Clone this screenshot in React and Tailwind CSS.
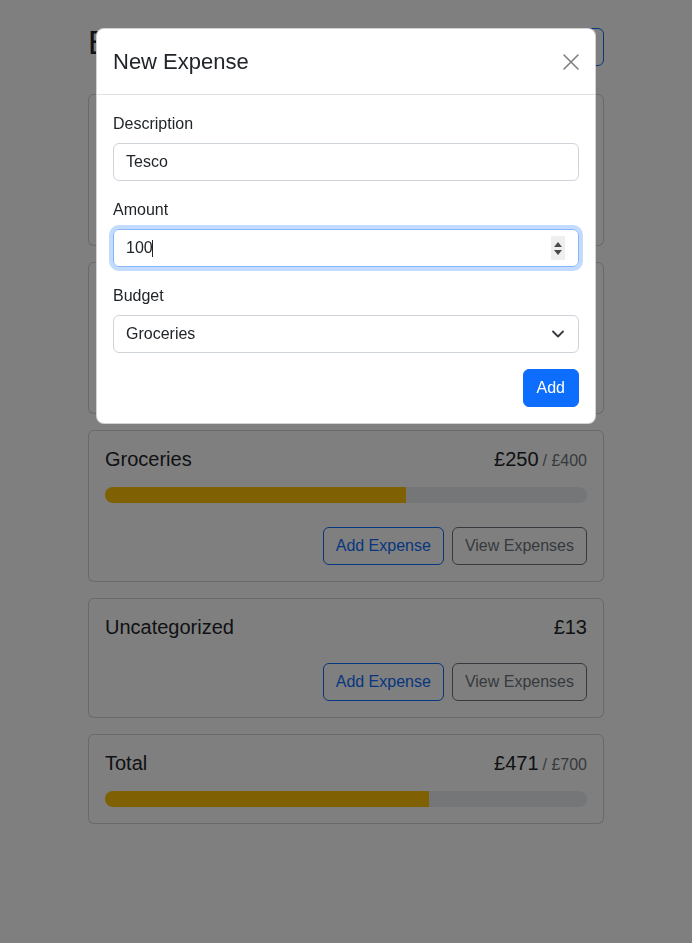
import { useState } from "react";

const budgets = [
  { id: 1, name: "Entertainment", amount: 120, max: 200 },
  { id: 2, name: "Utilities", amount: 88, max: 100 },
  { id: 3, name: "Groceries", amount: 250, max: 400 },
];

const fmt = (n) => "£" + n;

function barColor(amount, max) {
  const ratio = amount / max;
  if (ratio < 0.5) return "bg-[#0d6efd]";
  if (ratio < 0.75) return "bg-[#ffc107]";
  return "bg-[#dc3545]";
}

function BudgetCard({ name, amount, max, hideButtons }) {
  return (
    <div className="rounded-md border border-black/[0.175] bg-white">
      <div className="p-4">
        <div className="mb-4 flex items-baseline justify-between text-[20px] leading-[1.2]">
          <div>{name}</div>
          <div className="flex items-baseline">
            {fmt(amount)}
            {max && (
              <span className="ml-1 text-[16px] text-[#6c757d]">/ {fmt(max)}</span>
            )}
          </div>
        </div>
        {max && (
          <div className="h-4 overflow-hidden rounded-full bg-[#e9ecef]">
            <div
              className={"h-full " + barColor(amount, max)}
              style={{ width: `${(amount / max) * 100}%` }}
            />
          </div>
        )}
        {!hideButtons && (
          <div className="mt-6 flex justify-end gap-2">
            <button className="rounded-md border border-[#0d6efd] px-3 py-[6px] text-[16px] leading-6 text-[#0d6efd]">
              Add Expense
            </button>
            <button className="rounded-md border border-[#6c757d] px-3 py-[6px] text-[16px] leading-6 text-[#6c757d]">
              View Expenses
            </button>
          </div>
        )}
      </div>
    </div>
  );
}

function Label({ children }) {
  return <label className="mb-2 block pt-px text-[16px] leading-[23px]">{children}</label>;
}

function NewExpenseModal() {
  const [description, setDescription] = useState("Tesco");
  const [amount, setAmount] = useState("100");
  const [budget, setBudget] = useState("Groceries");

  return (
    <>
      <div className="fixed inset-0 bg-black/50" />
      <div className="fixed inset-0 overflow-y-auto">
        <div className="mx-auto mt-7 w-[500px] rounded-lg border border-black/[0.175] bg-white">
          <div className="flex items-center justify-between border-b border-[#dee2e6] p-4">
            <h5 className="text-[22px] font-medium leading-[33px]">New Expense</h5>
            <button className="text-[#808080]" aria-label="Close">
              <svg width="16" height="16" viewBox="0 0 16 16" fill="none" stroke="currentColor" strokeWidth="1.6" strokeLinecap="round">
                <path d="M1 1l14 14M15 1L1 15" />
              </svg>
            </button>
          </div>
          <div className="p-4">
            <div className="mb-4">
              <Label>Description</Label>
              <input
                type="text"
                value={description}
                onChange={(e) => setDescription(e.target.value)}
                className="block h-[38px] w-full rounded-md border border-[#ced4da] px-3 text-[16px] outline-none"
              />
            </div>
            <div className="mb-4">
              <Label>Amount</Label>
              <div className="relative">
                <input
                  type="text"
                  inputMode="numeric"
                  value={amount}
                  onChange={(e) => setAmount(e.target.value)}
                  className="block h-[38px] w-full rounded-md border border-[#86b7fe] px-3 text-[16px] shadow-[0_0_0_4px_rgba(13,110,253,0.25)] outline-none"
                />
                <span className="absolute left-[39px] top-[11px] h-[17px] w-px bg-[#212529]" />
                <div className="absolute right-[14px] top-[7px] flex h-[24px] w-[14px] flex-col items-center justify-center gap-[3px] bg-[#efefef]">
                  <svg width="8" height="5" viewBox="0 0 8 5"><path d="M4 0L8 5H0z" fill="#4a4a4a" /></svg>
                  <svg width="8" height="5" viewBox="0 0 8 5"><path d="M0 0h8L4 5z" fill="#4a4a4a" /></svg>
                </div>
              </div>
            </div>
            <div className="mb-4">
              <Label>Budget</Label>
              <div className="relative">
                <select
                  value={budget}
                  onChange={(e) => setBudget(e.target.value)}
                  className="block h-[38px] w-full appearance-none rounded-md border border-[#ced4da] bg-white px-3 text-[16px] text-[#212529] outline-none"
                >
                  <option>Uncategorized</option>
                  <option>Entertainment</option>
                  <option>Utilities</option>
                  <option>Groceries</option>
                </select>
                <svg
                  className="pointer-events-none absolute right-[15px] top-[15px]"
                  width="12"
                  height="8"
                  viewBox="0 0 12 8"
                  fill="none"
                  stroke="#343a40"
                  strokeWidth="1.8"
                  strokeLinecap="round"
                  strokeLinejoin="round"
                >
                  <path d="M1 1.5l5 5 5-5" />
                </svg>
              </div>
            </div>
            <div className="flex justify-end">
              <button className="rounded-md border border-[#0d6efd] bg-[#0d6efd] px-[13px] py-[6px] text-[16px] leading-6 text-white">
                Add
              </button>
            </div>
          </div>
        </div>
      </div>
    </>
  );
}

export default function App() {
  const total = budgets.reduce((s, b) => s + b.amount, 0) + 13;
  const totalMax = budgets.reduce((s, b) => s + b.max, 0);

  return (
    <div className="min-h-screen bg-white font-['Liberation_Sans',Arial,sans-serif] text-[#212529]">
      <div className="mx-auto max-w-[540px] px-3 pt-6">
        <div className="mb-6 flex items-center gap-2">
          <h1 className="mb-[7px] mr-auto text-[32.4px] font-medium leading-[1.2]">Budgets</h1>
          <button className="rounded-md border border-[#0d6efd] bg-[#0d6efd] px-3 py-[6px] text-[16px] leading-6 text-white">
            Add Budget
          </button>
          <button className="rounded-md border border-[#0d6efd] px-3 py-[6px] text-[16px] leading-6 text-[#0d6efd]">
            Add Expense
          </button>
        </div>
        <div className="grid grid-cols-1 items-start gap-4">
          {budgets.map((b) => (
            <BudgetCard key={b.id} name={b.name} amount={b.amount} max={b.max} />
          ))}
          <BudgetCard name="Uncategorized" amount={13} />
          <BudgetCard name="Total" amount={total} max={totalMax} hideButtons />
        </div>
      </div>
      <NewExpenseModal />
    </div>
  );
}
